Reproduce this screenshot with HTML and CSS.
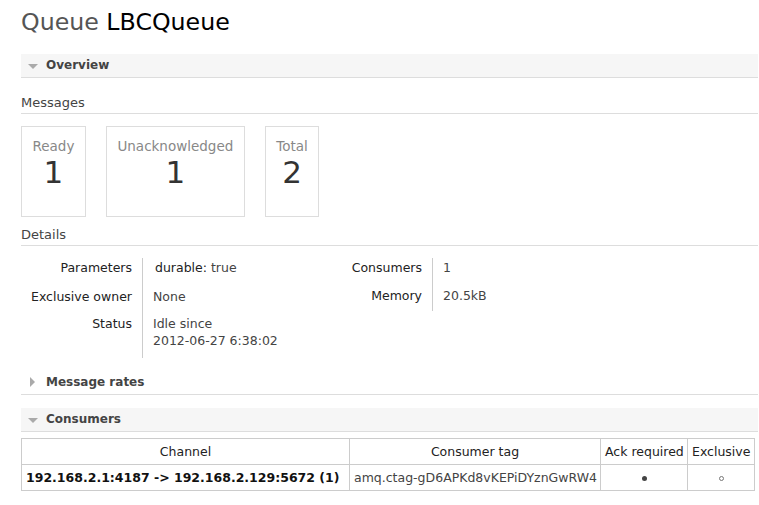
FILE: index.html
```html
<!DOCTYPE html>
<html>
<head>
<meta charset="utf-8">
<title>Queue LBCQueue</title>
<link rel="stylesheet" href="styles.css">
</head>
<body>
<div class="page">
  <h1 class="title"><span class="title-kind">Queue</span> LBCQueue</h1>

  <div class="section">
    <h2 class="section-header open"><span class="tri-down"></span>Overview</h2>
    <div class="section-body">
      <h3 class="sub">Messages</h3>
      <div class="boxes">
        <div class="box"><div class="box-label">Ready</div><div class="box-num">1</div></div>
        <div class="box"><div class="box-label">Unacknowledged</div><div class="box-num">1</div></div>
        <div class="box"><div class="box-label">Total</div><div class="box-num">2</div></div>
      </div>

      <h3 class="sub details-h">Details</h3>
      <div class="facts-row">
        <table class="facts facts-left">
          <tr class="r1"><th>Parameters</th><td><span class="kv"><span class="key">durable:</span> true</span></td></tr>
          <tr class="r2"><th>Exclusive owner</th><td>None</td></tr>
          <tr class="r3"><th>Status</th><td>Idle since<br>2012-06-27 6:38:02</td></tr>
        </table>
        <table class="facts facts-right">
          <tr class="r1b"><th>Consumers</th><td>1</td></tr>
          <tr class="r2b"><th>Memory</th><td>20.5kB</td></tr>
        </table>
      </div>
    </div>
  </div>

  <div class="section">
    <h2 class="section-header closed"><span class="tri-right"></span>Message rates</h2>
  </div>

  <div class="section">
    <h2 class="section-header open consumers-h"><span class="tri-down"></span>Consumers</h2>
    <table class="list">
      <colgroup>
        <col class="c-channel"><col class="c-tag"><col class="c-ack"><col class="c-excl">
      </colgroup>
      <thead>
        <tr><th>Channel</th><th>Consumer tag</th><th>Ack required</th><th>Exclusive</th></tr>
      </thead>
      <tbody>
        <tr>
          <td class="chan">192.168.2.1:4187 -&gt; 192.168.2.129:5672 (1)</td>
          <td class="tag">amq.ctag-gD6APKd8vKEPiDYznGwRW4</td>
          <td class="center"><span class="dot-filled"></span></td>
          <td class="center"><span class="dot-hollow"></span></td>
        </tr>
      </tbody>
    </table>
  </div>
</div>
</body>
</html>
```
FILE: styles.css
```css
html, body {
  margin: 0;
  padding: 0;
  background: #fff;
}
body {
  font-family: "DejaVu Sans", Verdana, sans-serif;
  font-size: 12.5px;
  color: #444;
}
.page {
  padding: 8px 1px 20px 21px;
}
.title {
  margin: 0;
  font-size: 23.7px;
  line-height: 28px;
  font-weight: normal;
  color: #000;
}
.title-kind {
  color: #555;
}
.section-header {
  margin: 0;
  position: relative;
  height: 23px;
  line-height: 23px;
  border-bottom: 1px solid #ddd;
  padding-left: 25px;
  font-size: 12px;
  font-weight: bold;
  color: #444;
}
.section-header.open {
  background: #f6f6f6;
}
.title + .section .section-header {
  margin-top: 18px;
}
.tri-down {
  position: absolute;
  left: 7px;
  top: 10px;
  width: 0;
  height: 0;
  border-left: 5px solid transparent;
  border-right: 5px solid transparent;
  border-top: 5px solid #aaa;
}
.tri-right {
  position: absolute;
  left: 9px;
  top: 6px;
  width: 0;
  height: 0;
  border-top: 5px solid transparent;
  border-bottom: 5px solid transparent;
  border-left: 5px solid #aaa;
}
.sub {
  margin: 17px 0 0;
  font-size: 13px;
  line-height: 16px;
  font-weight: normal;
  color: #444;
  padding-bottom: 2px;
  border-bottom: 1px solid #ddd;
}
.details-h {
  margin-top: 10px;
}
.boxes {
  display: flex;
  gap: 20px;
  margin-top: 12px;
}
.box {
  border: 1px solid #ddd;
  height: 78px;
  padding: 11px 10.5px 0;
  text-align: center;
  box-sizing: content-box;
}
.box-label {
  font-size: 13.5px;
  line-height: 17px;
  color: #888;
  white-space: nowrap;
}
.box-num {
  font-size: 31px;
  line-height: 34px;
  color: #333;
}
.facts-row {
  display: flex;
  align-items: flex-start;
  margin-top: 12px;
}
.facts {
  border-collapse: collapse;
  border-spacing: 0;
}
.facts th {
  text-align: right;
  font-weight: normal;
  color: #222;
  border-right: 1px solid #ccc;
  padding: 1px 10px 0 0;
  vertical-align: top;
  line-height: 17px;
  white-space: nowrap;
}
.facts td {
  padding: 1px 0 0 10px;
  vertical-align: top;
  line-height: 17px;
  color: #444;
  white-space: nowrap;
}
.facts-left th {
  width: 111px;
}
.facts-left td {
  width: 190px;
}
.facts-right th {
  width: 79px;
}
.facts tr.r1 th, .facts tr.r1 td { height: 28px; }
.facts tr.r2 th, .facts tr.r2 td { height: 26px; }
.facts tr.r3 th, .facts tr.r3 td { height: 43px; }
.facts tr.r1b th, .facts tr.r1b td { height: 27px; }
.facts tr.r2b th, .facts tr.r2b td { height: 24px; }
.kv .key {
  color: #222;
}
.kv {
  padding-left: 2px;
}
.section + .section .section-header.closed {
  margin-top: 13px;
}
.consumers-h {
  margin-top: 13px;
}
.list {
  margin-top: 6px;
  border-collapse: collapse;
  table-layout: fixed;
  width: 733px;
}
.c-channel { width: 328px; }
.c-tag { width: 251px; }
.c-ack { width: 87px; }
.c-excl { width: 67px; }
.list th, .list td {
  border: 1px solid #ccc;
  padding: 4px 4px;
  line-height: 17px;
  white-space: nowrap;
  overflow: hidden;
}
.list th {
  font-weight: normal;
  color: #222;
  text-align: center;
}
.list td.chan {
  font-weight: bold;
  color: #111;
}
.list td.tag {
  color: #444;
}
.center {
  text-align: center;
}
.dot-filled, .dot-hollow {
  display: inline-block;
  width: 5px;
  height: 5px;
  border-radius: 50%;
  box-sizing: border-box;
  vertical-align: middle;
}
.dot-filled {
  background: #444;
}
.dot-hollow {
  border: 1px solid #777;
}
```
